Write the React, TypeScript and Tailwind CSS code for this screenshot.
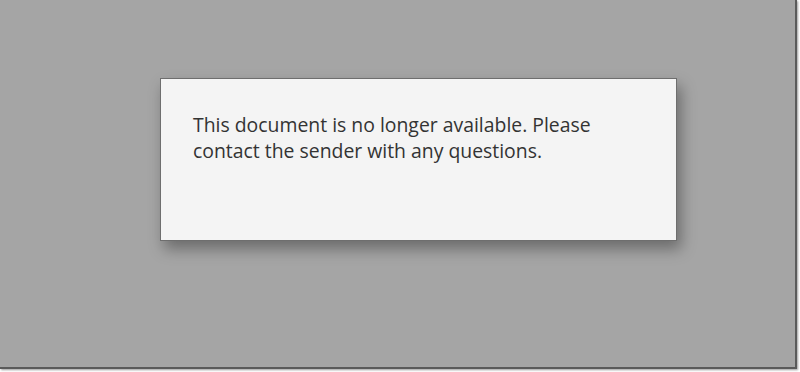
export default function App() {
  return (
    <div className="w-[800px] h-[372px] bg-white overflow-hidden" style={{ fontFamily: '"Open Sans", "Noto Sans", sans-serif' }}>
      <div className="w-[797px] h-[369px] bg-[#a5a5a5] border-r-[2px] border-b-[2px] border-[#5a5a5a] shadow-[1px_1px_2px_rgba(0,0,0,0.4)] pt-[78px] pl-[160px]">
        <div className="w-[517px] h-[163px] bg-[#f4f4f4] border border-[#6e6e6e] shadow-[4px_8px_14px_rgba(0,0,0,0.35)] pl-[32px] pr-[40px] pt-[33px]">
          <p className="text-[19.4px] leading-[26px] text-[#333333]">
            This document is no longer available. Please contact the sender with any questions.
          </p>
        </div>
      </div>
    </div>
  );
}
